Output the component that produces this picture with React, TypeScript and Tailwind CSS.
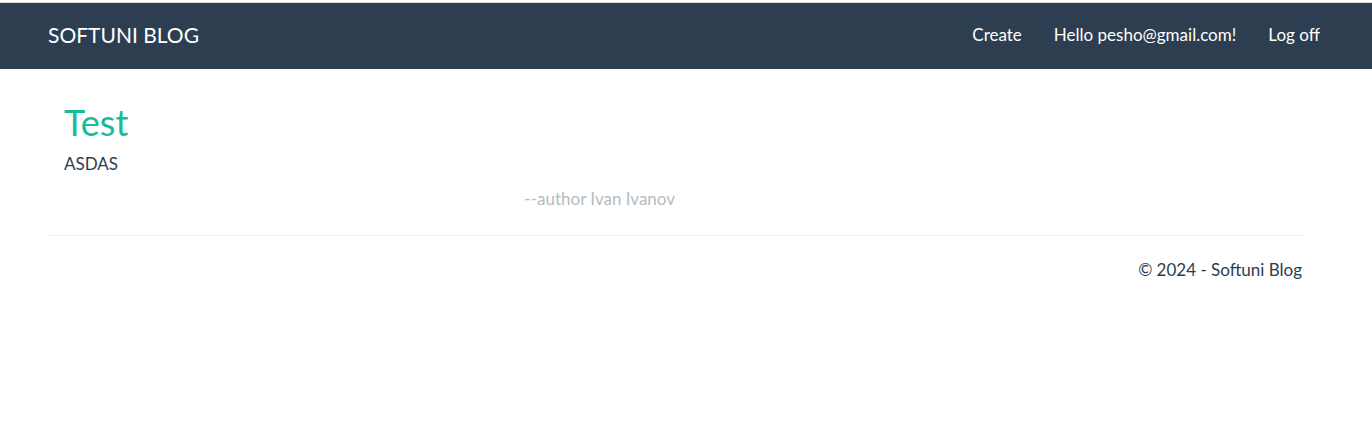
const navLinks = [
  { label: "Create", href: "#create" },
  { label: "Hello pesho@gmail.com!", href: "#profile" },
  { label: "Log off", href: "#logoff" },
];

export default function App() {
  return (
    <div className="border-t-2 border-white bg-white font-[Lato,sans-serif] text-[17px] leading-6 text-[#2c3e50]">
      <header className="border-t border-[#dcdcdc] bg-[#2c3e50] text-white">
        <nav className="flex h-[66px] items-center justify-between pr-9 pb-[2px] pl-12">
          <a href="#home" className="text-[21px] leading-5">SOFTUNI BLOG</a>
          <ul className="flex">
            {navLinks.map((link) => (
              <li key={link.label}>
                <a href={link.href} className="block px-4">{link.label}</a>
              </li>
            ))}
          </ul>
        </nav>
      </header>
      <div className="mr-[70px] ml-12">
        <main className="px-4 pt-[30px]">
          <article>
            <h2 className="text-4xl leading-[46px]">
              <a href="#test" className="text-[#18bc9c]">Test</a>
            </h2>
            <p className="mt-[7px]">ASDAS</p>
            <small className="mt-[11px] block w-1/2 text-right text-[17px] text-[#b4bcc2]">--author Ivan Ivanov</small>
          </article>
        </main>
        <hr className="mt-6 border-[#ecf0f1]" />
        <footer className="pt-[22px] text-right">
          <p>© 2024 - Softuni Blog</p>
        </footer>
      </div>
    </div>
  );
}
